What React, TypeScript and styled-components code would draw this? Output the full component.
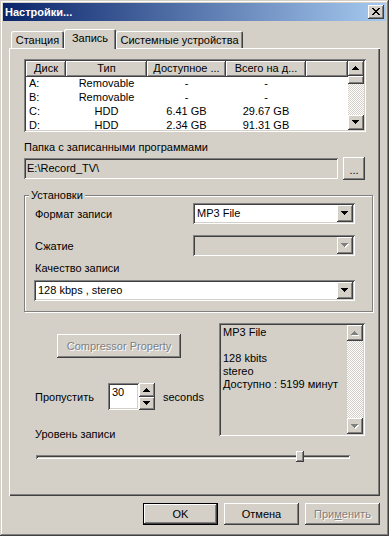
import React from 'react';
import styled, { createGlobalStyle, css } from 'styled-components';

const face = '#d4d0c8';

const GlobalStyle = createGlobalStyle`
  html, body {
    margin: 0;
    padding: 0;
    background: ${face};
  }
  body {
    font-family: "Liberation Sans", Arial, sans-serif;
    font-size: 11px;
    color: #000;
  }
  * {
    box-sizing: border-box;
  }
`;

const raised = css`
  background: ${face};
  box-shadow: inset -1px -1px #404040, inset 1px 1px #fff, inset -2px -2px #808080, inset 2px 2px ${face};
`;

const sunken = css`
  box-shadow: inset 1px 1px #808080, inset -1px -1px #fff, inset 2px 2px #404040, inset -2px -2px ${face};
`;

const disabledText = css`
  color: #808080;
  text-shadow: 1px 1px #fff;
`;

const Window = styled.div`
  width: 389px;
  height: 536px;
  padding: 3px;
  display: flex;
  flex-direction: column;
  background: ${face};
  box-shadow: inset -1px -1px #404040, inset 1px 1px ${face}, inset -2px -2px #808080, inset 2px 2px #fff;
`;

const TitleBar = styled.div`
  height: 18px;
  display: flex;
  align-items: center;
  justify-content: space-between;
  padding: 0 2px;
  background: linear-gradient(to right, #0a246a, #a6caf0);
`;

const Title = styled.span`
  color: #fff;
  font-weight: bold;
  font-size: 11px;
`;

const CloseButton = styled.div`
  ${raised};
  width: 16px;
  height: 14px;
  display: flex;
  align-items: center;
  justify-content: center;
  padding-bottom: 1px;
`;

const Body = styled.div`
  flex: 1;
  display: flex;
  flex-direction: column;
  padding: 8px 6px 0 6px;
`;

const TabStrip = styled.div`
  height: 19px;
  display: flex;
  align-items: flex-end;
  padding-left: 2px;
`;

const Tab = styled.div<{ $active?: boolean; $w: number }>`
  position: relative;
  z-index: ${p => (p.$active ? 2 : 0)};
  width: ${p => p.$w}px;
  height: ${p => (p.$active ? 20 : 17)}px;
  margin-bottom: ${p => (p.$active ? -1 : 0)}px;
  display: flex;
  align-items: center;
  justify-content: center;
  padding-bottom: ${p => (p.$active ? 2 : 0)}px;
  background: ${face};
  border-radius: 2px 2px 0 0;
  box-shadow: inset 1px 1px #fff, inset -1px 0 #404040, inset -2px 0 #808080;
  white-space: nowrap;
`;

const Panel = styled.div`
  height: 448px;
  display: flex;
  flex-direction: column;
  align-items: flex-start;
  padding: 11px 0 0 15px;
  background: ${face};
  box-shadow: inset 1px 1px #fff, inset -1px -1px #404040, inset -2px -2px #808080;
`;

/* list view */

const ListView = styled.div`
  width: 342px;
  height: 73px;
  padding: 2px;
  display: flex;
  background: #fff;
  ${sunken};
`;

const ListBody = styled.div`
  flex: 1;
  display: flex;
  flex-direction: column;
  overflow: hidden;
`;

const ListHeader = styled.div`
  height: 16px;
  display: flex;
  flex-shrink: 0;
`;

const HeaderCell = styled.div<{ $w?: number }>`
  ${raised};
  ${p => (p.$w ? `width: ${p.$w}px;` : 'flex: 1;')}
  height: 16px;
  line-height: 15px;
  text-align: center;
  white-space: nowrap;
  overflow: hidden;
  padding: 0 3px;
`;

const ListRow = styled.div`
  height: 14px;
  display: flex;
  flex-shrink: 0;
`;

const Cell = styled.div<{ $w: number; $left?: boolean }>`
  width: ${p => p.$w}px;
  line-height: 13px;
  text-align: ${p => (p.$left ? 'left' : 'center')};
  padding-left: ${p => (p.$left ? 3 : 0)}px;
  white-space: nowrap;
`;

/* scrollbar */

const ScrollBar = styled.div`
  width: 16px;
  display: flex;
  flex-direction: column;
  flex-shrink: 0;
`;

const ScrollButton = styled.div<{ $h: number }>`
  ${raised};
  height: ${p => p.$h}px;
  flex-shrink: 0;
  display: flex;
  align-items: center;
  justify-content: center;
`;

const ScrollThumb = styled.div<{ $h: number }>`
  ${raised};
  height: ${p => p.$h}px;
  flex-shrink: 0;
`;

const ScrollTrack = styled.div`
  flex: 1;
  background: repeating-conic-gradient(#fff 0 25%, ${face} 0 50%) 0 0 / 2px 2px;
`;

/* folder */

const FieldLabel = styled.div<{ $mt?: number; $ml?: number }>`
  line-height: 13px;
  margin-top: ${p => p.$mt ?? 0}px;
  margin-left: ${p => p.$ml ?? 0}px;
  white-space: nowrap;
`;

const PathRow = styled.div`
  margin-top: 3px;
  height: 23px;
  display: flex;
  align-items: center;
`;

const PathField = styled.div`
  width: 314px;
  height: 21px;
  line-height: 21px;
  padding-left: 3px;
  background: ${face};
  ${sunken};
`;

const SmallButton = styled.div`
  ${raised};
  margin-left: 5px;
  width: 22px;
  height: 23px;
  display: flex;
  align-items: flex-end;
  justify-content: center;
  padding-bottom: 4px;
  line-height: 11px;
`;

/* group box */

const Group = styled.div`
  margin-top: 15px;
  width: 349px;
  display: flex;
  flex-direction: column;
  align-items: flex-start;
  padding: 0 17px 10px 10px;
  border: 1px solid #808080;
  box-shadow: inset 1px 1px #fff, 1px 1px #fff;
`;

const Legend = styled.div`
  margin: -7px 0 0 -6px;
  padding: 0 2px;
  line-height: 13px;
  background: ${face};
`;

const FieldRow = styled.div<{ $mt: number }>`
  margin-top: ${p => p.$mt}px;
  display: grid;
  grid-template-columns: 158px 162px;
  align-items: center;
  height: 21px;
`;

const ComboWrap = styled.div`
  margin-top: 5px;
`;

const Select = styled.div<{ $w: number; $disabled?: boolean; $ml?: number }>`
  width: ${p => p.$w}px;
  height: 21px;
  margin-left: ${p => p.$ml ?? 0}px;
  padding: 2px;
  display: flex;
  background: ${p => (p.$disabled ? face : '#fff')};
  ${sunken};
`;

const SelectText = styled.div`
  flex: 1;
  line-height: 17px;
  padding-left: 2px;
  white-space: nowrap;
`;

const DropButton = styled.div`
  ${raised};
  width: 16px;
  display: flex;
  align-items: center;
  justify-content: center;
`;

/* lower area */

const Lower = styled.div`
  margin-top: 11px;
  display: grid;
  grid-template-columns: 195px 146px;
  align-items: start;
`;

const LeftCol = styled.div`
  display: flex;
  flex-direction: column;
  align-items: flex-start;
`;

const PushButton = styled.div<{ $w: number; $h: number; $disabled?: boolean; $default?: boolean }>`
  width: ${p => p.$w}px;
  height: ${p => p.$h}px;
  display: flex;
  align-items: center;
  justify-content: center;
  white-space: nowrap;
  background: ${face};
  box-shadow: ${p =>
    p.$default
      ? 'inset 0 0 0 1px #000, inset -2px -2px #404040, inset 2px 2px #fff, inset -3px -3px #808080'
      : `inset -1px -1px #404040, inset 1px 1px #fff, inset -2px -2px #808080, inset 2px 2px ${face}`};
  ${p => p.$disabled && disabledText};
`;

const CompressorButton = styled(PushButton)`
  margin: 11px 0 0 33px;
`;

const SpinRow = styled.div`
  margin-top: 25px;
  height: 27px;
  display: flex;
  align-items: center;
`;

const SpinLabel = styled.div`
  width: 73px;
  margin-left: 11px;
`;

const SpinEdit = styled.div`
  width: 31px;
  height: 27px;
  padding: 3px 4px;
  line-height: 13px;
  background: #fff;
  ${sunken};
`;

const SpinButtons = styled.div`
  width: 16px;
  display: flex;
  flex-direction: column;
`;

const Unit = styled.div`
  margin-left: 8px;
`;

const InfoBox = styled.div`
  height: 113px;
  padding: 2px;
  display: flex;
  background: ${face};
  ${sunken};
`;

const InfoText = styled.div`
  flex: 1;
  padding: 1px 2px;
  line-height: 13px;
  white-space: pre;
`;

const Slider = styled.div`
  position: relative;
  margin: 10px 0 0 12px;
  width: 314px;
  height: 12px;
  display: flex;
  align-items: center;
`;

const SliderTrack = styled.div`
  width: 100%;
  height: 4px;
  ${sunken};
`;

const SliderThumb = styled.div`
  ${raised};
  position: absolute;
  top: 0;
  width: 8px;
  height: 11px;
`;

const ButtonRow = styled.div`
  margin-top: 7px;
  display: flex;
  justify-content: flex-end;
  gap: 6px;
`;

/* glyphs */

const upPath = 'M3 0h1v1H3z M2 1h3v1H2z M1 2h5v1H1z M0 3h7v1H0z';
const downPath = 'M0 0h7v1H0z M1 1h5v1H1z M2 2h3v1H2z M3 3h1v1H3z';

function Arrow({ dir, disabled }: { dir: 'up' | 'down'; disabled?: boolean }) {
  const d = dir === 'up' ? upPath : downPath;
  return (
    <svg width="8" height="5" viewBox="0 0 8 5" shapeRendering="crispEdges">
      {disabled && <path d={d} fill="#fff" transform="translate(1 1)" />}
      <path d={d} fill={disabled ? '#808080' : '#000'} />
    </svg>
  );
}

function CloseGlyph() {
  return (
    <svg width="8" height="7" viewBox="0 0 8 7" shapeRendering="crispEdges">
      <path
        d="M0 0h2v1H0z M6 0h2v1H6z M1 1h2v1H1z M5 1h2v1H5z M2 2h4v1H2z M3 3h2v1H3z M2 4h4v1H2z M1 5h2v1H1z M5 5h2v1H5z M0 6h2v1H0z M6 6h2v1H6z"
        fill="#000"
      />
    </svg>
  );
}

function VScroll({ arrow, thumb, disabled }: { arrow: number; thumb?: number; disabled?: boolean }) {
  return (
    <ScrollBar>
      <ScrollButton $h={arrow}>
        <Arrow dir="up" disabled={disabled} />
      </ScrollButton>
      {thumb ? <ScrollThumb $h={thumb} /> : null}
      <ScrollTrack />
      <ScrollButton $h={arrow}>
        <Arrow dir="down" disabled={disabled} />
      </ScrollButton>
    </ScrollBar>
  );
}

function Combo({ w, text, disabled, ml }: { w: number; text?: string; disabled?: boolean; ml?: number }) {
  return (
    <Select $w={w} $disabled={disabled} $ml={ml}>
      <SelectText>{text}</SelectText>
      <DropButton>
        <Arrow dir="down" disabled={disabled} />
      </DropButton>
    </Select>
  );
}

const columns = [40, 81, 79, 80];

const drives = [
  { disk: 'A:', type: 'Removable', free: '-', total: '-' },
  { disk: 'B:', type: 'Removable', free: '-', total: '-' },
  { disk: 'C:', type: 'HDD', free: '6.41 GB', total: '29.67 GB' },
  { disk: 'D:', type: 'HDD', free: '2.34 GB', total: '91.31 GB' },
];

const level = 85;
const sliderWidth = 314;

export default function App() {
  return (
    <>
      <GlobalStyle />
      <Window>
        <TitleBar>
          <Title>Настройки...</Title>
          <CloseButton>
            <CloseGlyph />
          </CloseButton>
        </TitleBar>
        <Body>
          <TabStrip>
            <Tab $w={53}>Станция</Tab>
            <Tab $w={52} $active>
              Запись
            </Tab>
            <Tab $w={127}>Системные устройства</Tab>
          </TabStrip>
          <Panel>
            <ListView>
              <ListBody>
                <ListHeader>
                  <HeaderCell $w={columns[0]}>Диск</HeaderCell>
                  <HeaderCell $w={columns[1]}>Тип</HeaderCell>
                  <HeaderCell $w={columns[2]}>Доступное ...</HeaderCell>
                  <HeaderCell $w={columns[3]}>Всего на д...</HeaderCell>
                  <HeaderCell />
                </ListHeader>
                {drives.map(d => (
                  <ListRow key={d.disk}>
                    <Cell $w={columns[0]} $left>
                      {d.disk}
                    </Cell>
                    <Cell $w={columns[1]}>{d.type}</Cell>
                    <Cell $w={columns[2]}>{d.free}</Cell>
                    <Cell $w={columns[3]}>{d.total}</Cell>
                  </ListRow>
                ))}
              </ListBody>
              <VScroll arrow={15} thumb={8} />
            </ListView>

            <FieldLabel $mt={9}>Папка с записанными программами</FieldLabel>
            <PathRow>
              <PathField>E:\Record_TV\</PathField>
              <SmallButton>...</SmallButton>
            </PathRow>

            <Group>
              <Legend>Установки</Legend>
              <FieldRow $mt={1}>
                <span>Формат записи</span>
                <Combo w={162} text="MP3 File" />
              </FieldRow>
              <FieldRow $mt={11}>
                <span>Сжатие</span>
                <Combo w={162} disabled />
              </FieldRow>
              <FieldLabel $mt={6}>Качество записи</FieldLabel>
              <ComboWrap>
                <Combo w={321} text="128 kbps , stereo" ml={-1} />
              </ComboWrap>
            </Group>

            <Lower>
              <LeftCol>
                <CompressorButton $w={124} $h={24} $disabled>
                  Compressor Property
                </CompressorButton>
                <SpinRow>
                  <SpinLabel>Пропустить</SpinLabel>
                  <SpinEdit>30</SpinEdit>
                  <SpinButtons>
                    <ScrollButton $h={14}>
                      <Arrow dir="up" />
                    </ScrollButton>
                    <ScrollButton $h={13}>
                      <Arrow dir="down" />
                    </ScrollButton>
                  </SpinButtons>
                  <Unit>seconds</Unit>
                </SpinRow>
                <FieldLabel $mt={18} $ml={11}>
                  Уровень записи
                </FieldLabel>
              </LeftCol>
              <InfoBox>
                <InfoText>{'MP3 File\n\n128 kbits\nstereo\nДоступно : 5199 минут'}</InfoText>
                <VScroll arrow={16} disabled />
              </InfoBox>
            </Lower>

            <Slider>
              <SliderTrack />
              <SliderThumb style={{ left: Math.round(((sliderWidth - 8) * level) / 100) }} />
            </Slider>
          </Panel>

          <ButtonRow>
            <PushButton $w={75} $h={22} $default>
              OK
            </PushButton>
            <PushButton $w={75} $h={22}>
              Отмена
            </PushButton>
            <PushButton $w={75} $h={22} $disabled>
              <span>
                При<u>м</u>енить
              </span>
            </PushButton>
          </ButtonRow>
        </Body>
      </Window>
    </>
  );
}
